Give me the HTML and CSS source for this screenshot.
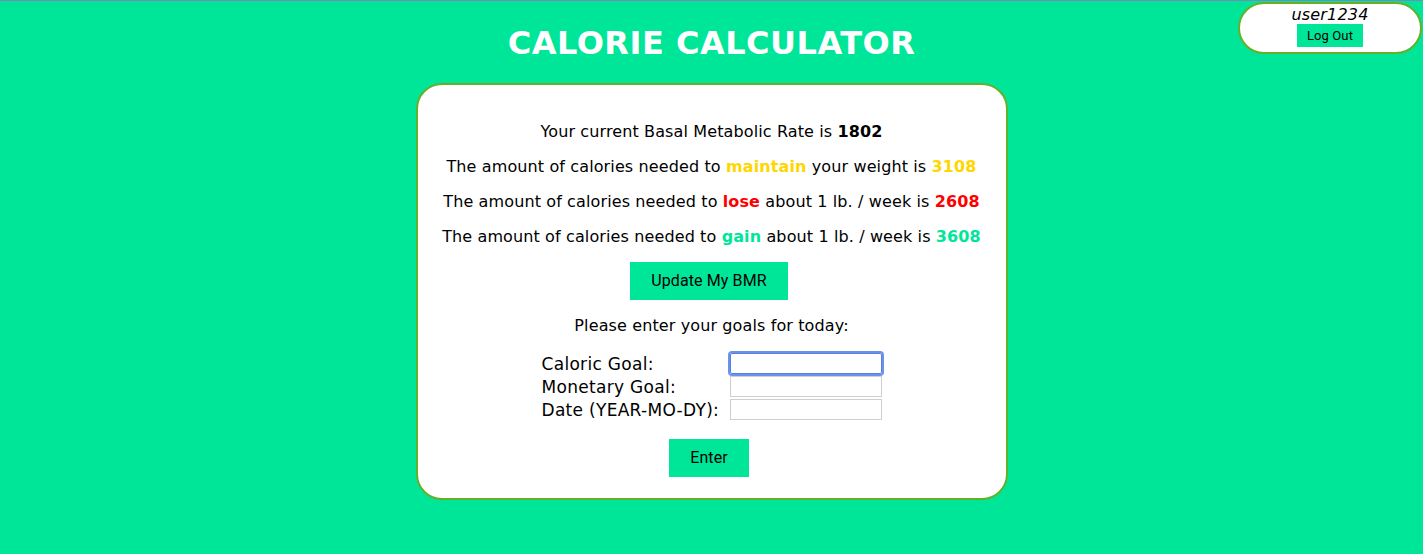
FILE: index.html
```html
<!DOCTYPE html>
<html lang="en">
<head>
<meta charset="utf-8">
<title>Calorie Calculator</title>
<link rel="stylesheet" href="styles.css">
</head>
<body>
<div class="user-box">
  <div class="user-name">user1234</div>
  <button class="btn btn-small">Log Out</button>
</div>
<h1 class="title">CALORIE CALCULATOR</h1>
<div class="card">
  <p>Your current Basal Metabolic Rate is <b>1802</b></p>
  <p>The amount of calories needed to <b class="c-maintain">maintain</b> your weight is <b class="c-maintain">3108</b></p>
  <p>The amount of calories needed to <b class="c-lose">lose</b> about 1 lb. / week is <b class="c-lose">2608</b></p>
  <p>The amount of calories needed to <b class="c-gain">gain</b> about 1 lb. / week is <b class="c-gain">3608</b></p>
  <button class="btn btn-main">Update My BMR</button>
  <p>Please enter your goals for today:</p>
  <form class="goals">
    <div class="goal-grid">
      <label class="goal-label">Caloric Goal:</label><input class="field focused" type="text">
      <label class="goal-label">Monetary Goal:</label><input class="field" type="text">
      <label class="goal-label">Date (YEAR-MO-DY):</label><input class="field" type="text">
    </div>
    <button class="btn btn-main btn-enter" type="button">Enter</button>
  </form>
</div>
</body>
</html>
```
FILE: styles.css
```css
html, body {
  margin: 0;
  padding: 0;
}
body {
  background: #00e699;
  border-top: 1px solid #7f86bb;
  font-family: "DejaVu Sans", Verdana, sans-serif;
  font-size: 16px;
  color: #000;
}
.title {
  text-align: center;
  color: #fff;
  font-size: 32px;
  font-weight: bold;
  letter-spacing: 0.5px;
  margin: 23px 0 21px;
}
.card {
  width: 588px;
  margin: 0 auto;
  background: #fff;
  border: 2px solid #63b12a;
  border-radius: 26px;
  padding: 21px 0 21px;
  text-align: center;
  letter-spacing: 0.12px;
}
.card p {
  margin: 16px 0;
}
.c-maintain { color: #ffd700; }
.c-lose { color: #ff0000; }
.c-gain { color: #00e699; }
.btn {
  font-family: Roboto, "Liberation Sans", sans-serif;
  font-size: 16px;
  background: #00e699;
  border: none;
  color: #000;
  padding: 10px 21px;
  line-height: 18px;
  letter-spacing: 0.1px;
  cursor: pointer;
}
.btn-main {
  margin-right: 5px;
}
.goals {
  margin: 0;
}
.goal-grid {
  display: grid;
  grid-template-columns: 188px 152px;
  grid-auto-rows: 21px;
  row-gap: 2px;
  width: 340px;
  margin: 0 auto;
  padding-top: 2px;
  text-align: left;
  align-items: center;
}
.goal-label {
  font-size: 17px;
  line-height: 20px;
  letter-spacing: 0.3px;
  white-space: nowrap;
}
.field {
  box-sizing: border-box;
  width: 152px;
  height: 21px;
  border: 1px solid #cfcfcf;
  padding: 1px 2px;
  margin: 0;
  font-size: 13px;
}
.field.focused {
  outline: 2px solid #6b93ec;
  outline-offset: 0;
  border-radius: 2px;
  border-color: #5b7fe0;
}
.btn-enter {
  margin-top: 19px;
}
.user-box {
  position: absolute;
  top: 2px;
  right: 1px;
  width: 180px;
  height: 48px;
  background: #fff;
  border: 2px solid #63b12a;
  border-radius: 26px;
  text-align: center;
}
.user-name {
  font-style: italic;
  font-size: 16px;
  line-height: 19px;
  margin-top: 1px;
  letter-spacing: 0.2px;
}
.btn-small {
  font-size: 13px;
  padding: 3px 10px;
  line-height: 17px;
  margin-top: 0;
}
```
